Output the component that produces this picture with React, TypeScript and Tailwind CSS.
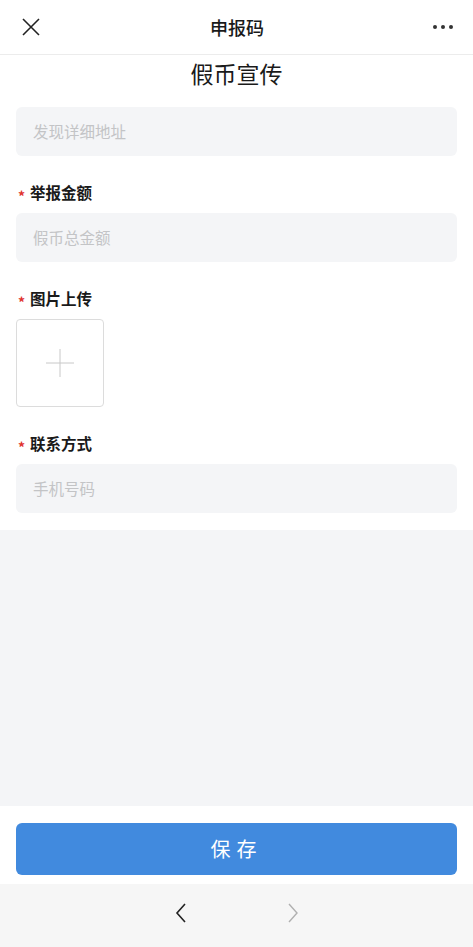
import React from "react";

const font = { fontFamily: '"Noto Sans CJK SC", "Noto Sans", sans-serif' };

function Label({ text }: { text: string }) {
  return (
    <div className="flex items-center h-[20px] mt-[27px] mb-[10px]">
      <span className="text-[#e0332f] text-[14px] font-bold w-[14px] pl-[2px] leading-none mt-[5px]">*</span>
      <span className="text-[15.5px] font-bold text-[#1a1a1a] leading-none">{text}</span>
    </div>
  );
}

function Field({ placeholder }: { placeholder: string }) {
  return (
    <div className="h-[49px] rounded-[6px] bg-[#f4f5f7] flex items-center px-[17px]">
      <span className="text-[15.5px] text-[#c3c4c6]">{placeholder}</span>
    </div>
  );
}

export default function App() {
  return (
    <div className="w-[473px] h-[947px] flex flex-col bg-[#f4f5f7]" style={font}>
      <header className="h-[55px] shrink-0 bg-white border-b border-[#ececec] flex items-center justify-between px-[20px]">
        <svg width="20" height="20" viewBox="0 0 20 20" className="ml-[1px]">
          <path d="M2 2 L18 18 M18 2 L2 18" stroke="#222" strokeWidth="1.6" fill="none" />
        </svg>
        <span className="text-[18px] text-[#1a1a1a] font-medium">申报码</span>
        <div className="flex gap-[4px] items-center">
          <span className="w-[4px] h-[4px] rounded-full bg-[#333]" />
          <span className="w-[4px] h-[4px] rounded-full bg-[#333]" />
          <span className="w-[4px] h-[4px] rounded-full bg-[#333]" />
        </div>
      </header>

      <main className="bg-white px-[16px] pb-[17px]">
        <h1 className="text-[23px] text-[#1a1a1a] text-center leading-[36px] mb-[16px]">假币宣传</h1>
        <Field placeholder="发现详细地址" />
        <Label text="举报金额" />
        <Field placeholder="假币总金额" />
        <Label text="图片上传" />
        <div className="w-[88px] h-[88px] border border-[#dcdcdc] rounded-[4px] flex items-center justify-center">
          <svg width="30" height="30" viewBox="0 0 30 30">
            <path d="M15 1 V29 M1 15 H29" stroke="#c8c8c8" strokeWidth="1" fill="none" />
          </svg>
        </div>
        <Label text="联系方式" />
        <Field placeholder="手机号码" />
      </main>

      <div className="flex-1" />

      <div className="bg-white h-[78px] shrink-0 px-[16px] pt-[17px] pb-[9px]">
        <button className="w-full h-[52px] rounded-[6px] bg-[#418ade] text-white text-[20px] tracking-[6px]">
          保存
        </button>
      </div>

      <nav className="h-[63px] shrink-0 bg-[#f6f6f6] flex items-center justify-center gap-[98px] pb-[6px]">
        <svg width="14" height="22" viewBox="0 0 14 22">
          <path d="M11 2 L3 11 L11 20" stroke="#222" strokeWidth="1.6" fill="none" />
        </svg>
        <svg width="14" height="22" viewBox="0 0 14 22">
          <path d="M3 2 L11 11 L3 20" stroke="#b0b0b0" strokeWidth="1.4" fill="none" />
        </svg>
      </nav>
    </div>
  );
}
